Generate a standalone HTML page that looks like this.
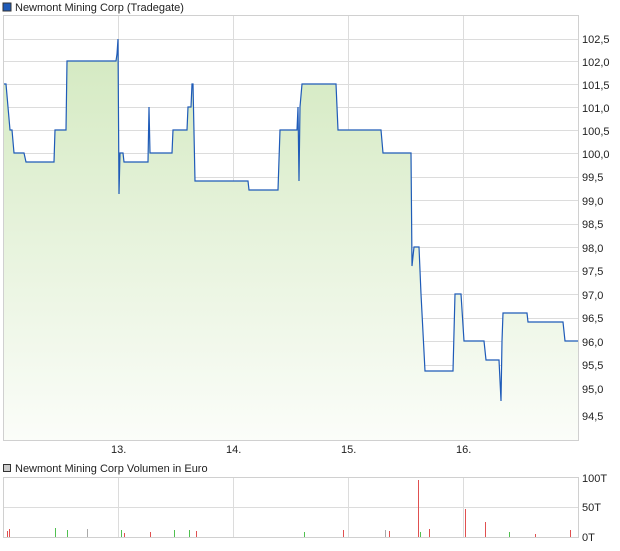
<!DOCTYPE html>
<html><head><style>
body{margin:0;background:#fff;font-family:"Liberation Sans",sans-serif;}
svg text{font-family:"Liberation Sans",sans-serif;font-size:11px;fill:#222;}
</style></head><body>
<svg width="620" height="546" xmlns="http://www.w3.org/2000/svg">
<defs><linearGradient id="g" x1="0" y1="0" x2="0" y2="1">
<stop offset="0" stop-color="#d3e9c0"/><stop offset="1" stop-color="#fbfdf9"/></linearGradient></defs>
<rect x="3" y="3" width="8" height="8" fill="#1f5bb8" stroke="#333" stroke-width="1"/>
<text x="15" y="11">Newmont Mining Corp (Tradegate)</text>
<g stroke="#dcdcdc" stroke-width="1">
<line x1="3" y1="39.5" x2="578" y2="39.5"/><line x1="3" y1="61.5" x2="578" y2="61.5"/><line x1="3" y1="84.5" x2="578" y2="84.5"/><line x1="3" y1="107.5" x2="578" y2="107.5"/><line x1="3" y1="130.5" x2="578" y2="130.5"/><line x1="3" y1="153.5" x2="578" y2="153.5"/><line x1="3" y1="177.5" x2="578" y2="177.5"/><line x1="3" y1="200.5" x2="578" y2="200.5"/><line x1="3" y1="224.5" x2="578" y2="224.5"/><line x1="3" y1="247.5" x2="578" y2="247.5"/><line x1="3" y1="271.5" x2="578" y2="271.5"/><line x1="3" y1="294.5" x2="578" y2="294.5"/><line x1="3" y1="318.5" x2="578" y2="318.5"/><line x1="3" y1="341.5" x2="578" y2="341.5"/><line x1="3" y1="365.5" x2="578" y2="365.5"/><line x1="3" y1="388.5" x2="578" y2="388.5"/><line x1="3" y1="412.5" x2="578" y2="412.5"/>
<line x1="118.5" y1="15" x2="118.5" y2="440"/><line x1="233.5" y1="15" x2="233.5" y2="440"/><line x1="348.5" y1="15" x2="348.5" y2="440"/><line x1="463.5" y1="15" x2="463.5" y2="440"/>
</g>
<polygon fill="url(#g)" points="4,84 6,84 8,107 10,130 12,130 14,153 24,153 26,162 54,162 55,130 66,130 67,61 116,61 117,54 118,39 119,194 120,153 123,153 124,162 148,162 149,107 150,153 172,153 173,130 187,130 188,107 191,107 192,84 193,84 195,181 248,181 249,190 278,190 280,130 297,130 298,107 299,181 300,107 302,84 336,84 338,130 381,130 383,153 411,153 412,266 414,247 419,247 421,294 425,371 453,371 455,294 461,294 464,341 484,341 486,360 499,360 501,401 502,341 503,313 527,313 528,322 563,322 565,341 578,341 578,440 4,440"/>
<polyline fill="none" stroke="#1f5bb8" stroke-width="1.2" points="4,84 6,84 8,107 10,130 12,130 14,153 24,153 26,162 54,162 55,130 66,130 67,61 116,61 117,54 118,39 119,194 120,153 123,153 124,162 148,162 149,107 150,153 172,153 173,130 187,130 188,107 191,107 192,84 193,84 195,181 248,181 249,190 278,190 280,130 297,130 298,107 299,181 300,107 302,84 336,84 338,130 381,130 383,153 411,153 412,266 414,247 419,247 421,294 425,371 453,371 455,294 461,294 464,341 484,341 486,360 499,360 501,401 502,341 503,313 527,313 528,322 563,322 565,341 578,341"/>
<rect x="3.5" y="15.5" width="575" height="425" fill="none" stroke="#d0d0d0"/>
<g><text x="582" y="43">102,5</text><text x="582" y="66">102,0</text><text x="582" y="89">101,5</text><text x="582" y="112">101,0</text><text x="582" y="135">100,5</text><text x="582" y="158">100,0</text><text x="582" y="181">99,5</text><text x="582" y="205">99,0</text><text x="582" y="228">98,5</text><text x="582" y="252">98,0</text><text x="582" y="275">97,5</text><text x="582" y="299">97,0</text><text x="582" y="322">96,5</text><text x="582" y="346">96,0</text><text x="582" y="369">95,5</text><text x="582" y="393">95,0</text><text x="582" y="420">94,5</text></g>
<text x="111" y="453">13.</text><text x="226" y="453">14.</text><text x="341" y="453">15.</text><text x="456" y="453">16.</text>
<rect x="3.5" y="464.5" width="7" height="7" fill="#ccc" stroke="#333"/>
<text x="15" y="472">Newmont Mining Corp Volumen in Euro</text>
<g stroke="#dcdcdc"><line x1="3" y1="507.5" x2="578" y2="507.5"/><line x1="118.5" y1="477" x2="118.5" y2="537"/><line x1="233.5" y1="477" x2="233.5" y2="537"/><line x1="348.5" y1="477" x2="348.5" y2="537"/><line x1="463.5" y1="477" x2="463.5" y2="537"/></g>
<rect x="3.5" y="477.5" width="575" height="60" fill="none" stroke="#d0d0d0"/>
<g stroke="#e05050"><line x1="7.5" y1="537" x2="7.5" y2="531"/><line x1="9.5" y1="537" x2="9.5" y2="529"/><line x1="124.5" y1="537" x2="124.5" y2="533"/><line x1="150.5" y1="537" x2="150.5" y2="532"/><line x1="196.5" y1="537" x2="196.5" y2="531"/><line x1="343.5" y1="537" x2="343.5" y2="530"/><line x1="389.5" y1="537" x2="389.5" y2="531"/><line x1="418.5" y1="537" x2="418.5" y2="480"/><line x1="429.5" y1="537" x2="429.5" y2="529"/><line x1="465.5" y1="537" x2="465.5" y2="509"/><line x1="485.5" y1="537" x2="485.5" y2="522"/><line x1="570.5" y1="537" x2="570.5" y2="530"/><line x1="535.5" y1="537" x2="535.5" y2="534"/></g>
<g stroke="#50c050"><line x1="55.5" y1="537" x2="55.5" y2="528"/><line x1="67.5" y1="537" x2="67.5" y2="530"/><line x1="121.5" y1="537" x2="121.5" y2="530"/><line x1="174.5" y1="537" x2="174.5" y2="530"/><line x1="189.5" y1="537" x2="189.5" y2="530"/><line x1="304.5" y1="537" x2="304.5" y2="532"/><line x1="420.5" y1="537" x2="420.5" y2="532"/><line x1="509.5" y1="537" x2="509.5" y2="532"/></g>
<g stroke="#aaa"><line x1="87.5" y1="537" x2="87.5" y2="529"/><line x1="385.5" y1="537" x2="385.5" y2="530"/></g>
<text x="582" y="482">100T</text><text x="582" y="511">50T</text><text x="582" y="541">0T</text>
</svg>
</body></html>
